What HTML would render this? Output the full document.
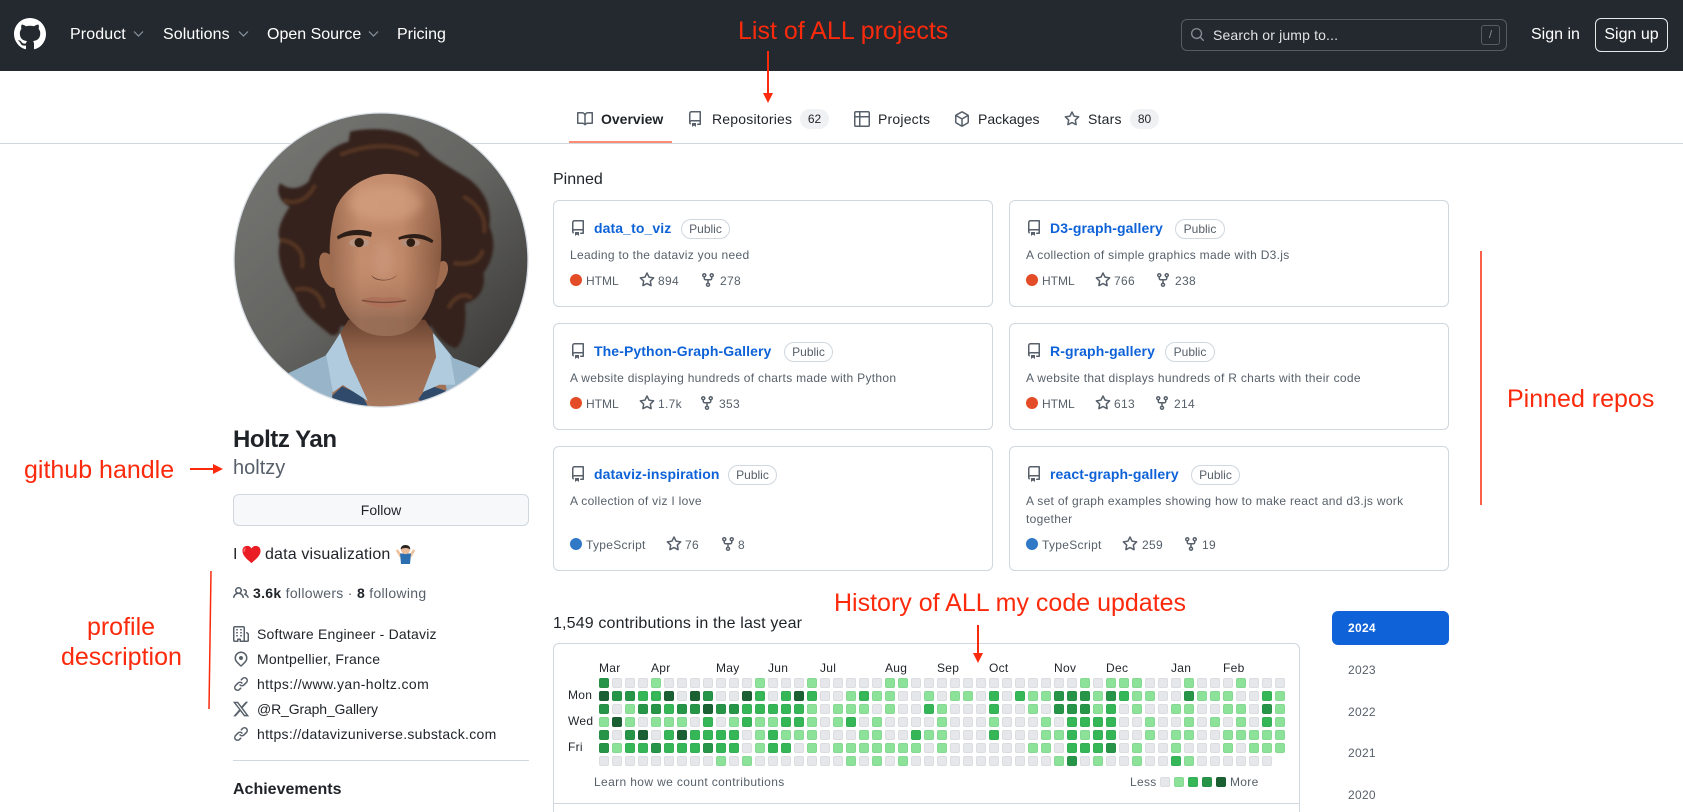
<!DOCTYPE html>
<html lang="en"><head><meta charset="utf-8"><title>holtzy</title>
<style>
html,body{margin:0;padding:0;background:#fff}
html{height:812px;overflow:hidden}
body{width:1683px;height:812px;position:relative;overflow:hidden;font-family:"Liberation Sans",sans-serif;color:#1f2328;font-size:14px}
.t{position:absolute;white-space:nowrap;line-height:20px}
.ic{position:absolute;display:block;overflow:visible}
.hd{position:absolute;left:0;top:0;width:1683px;height:71px;background:#24292f}
.w{color:#fff;font-size:16px}
.m{color:#57606a}
.g{fill:#57606a}
.s12{font-size:12px;letter-spacing:.3px}
.b{font-weight:700}
.r{color:#fb2a0c;font-size:25px;line-height:30px}
.card{position:absolute;box-sizing:border-box;width:440px;border:1px solid #d0d7de;border-radius:6px;background:#fff}
.name{color:#0e62d8;font-weight:700;font-size:14px;letter-spacing:.1px}
.pub{position:absolute;box-sizing:border-box;height:20px;line-height:18px;border:1px solid #d0d7de;border-radius:10px;font-size:12px;color:#57606a;text-align:center}
.dot{position:absolute;width:12px;height:12px;border-radius:50%}
.ct{position:absolute;height:20px;line-height:20px;border-radius:10px;background:#eff1f3;font-size:12px;text-align:center;color:#1f2328}
.grid{position:absolute;left:599px;top:678px;display:grid;grid-template-columns:repeat(53,10px);grid-auto-rows:10px;gap:3px}
.grid>*,.lg{display:block;width:10px;height:10px;border-radius:2px;box-sizing:border-box;box-shadow:inset 0 0 0 1px rgba(31,35,40,.05);text-decoration:none}
.grid b,.l0{background:#e6e7eb}
.grid u,.l1{background:#8ce299}
.grid s,.l2{background:#35b758}
.grid i,.l3{background:#279547}
.grid em,.l4{background:#1a6032}
.lg{position:absolute;top:777px}
</style></head><body>
<svg width="0" height="0" style="position:absolute"><defs>
<symbol id="mark" viewBox="0 0 16 16"><path d="M8 0c4.42 0 8 3.58 8 8a8.013 8.013 0 0 1-5.45 7.59c-.4.08-.55-.17-.55-.38 0-.27.01-1.13.01-2.2 0-.75-.25-1.23-.54-1.48 1.78-.2 3.65-.88 3.65-3.95 0-.88-.31-1.59-.82-2.15.08-.2.36-1.02-.08-2.12 0 0-.67-.22-2.2.82-.64-.18-1.32-.27-2-.27-.68 0-1.36.09-2 .27-1.53-1.03-2.2-.82-2.2-.82-.44 1.1-.16 1.92-.08 2.12-.51.56-.82 1.28-.82 2.15 0 3.06 1.86 3.75 3.64 3.95-.23.2-.44.55-.51 1.07-.46.21-1.61.55-2.33-.66-.15-.24-.6-.83-1.23-.82-.67.01-.27.38.01.53.34.19.73.9.82 1.13.16.45.68 1.31 2.69.94 0 .67.01 1.3.01 1.49 0 .21-.15.45-.55.37A7.995 7.995 0 0 1 0 8c0-4.42 3.58-8 8-8Z"/></symbol>
<symbol id="repo" viewBox="0 0 16 16"><path d="M2 2.5A2.5 2.5 0 0 1 4.5 0h8.75a.75.75 0 0 1 .75.75v12.5a.75.75 0 0 1-.75.75h-2.5a.75.75 0 0 1 0-1.5h1.75v-2h-8a1 1 0 0 0-.714 1.7.75.75 0 1 1-1.072 1.05A2.495 2.495 0 0 1 2 11.5Zm10.5-1h-8a1 1 0 0 0-1 1v6.708A2.486 2.486 0 0 1 4.5 9h8ZM5 12.25a.25.25 0 0 1 .25-.25h3.5a.25.25 0 0 1 .25.25v3.25a.25.25 0 0 1-.4.2l-1.45-1.087a.249.249 0 0 0-.3 0L5.4 15.7a.25.25 0 0 1-.4-.2Z"/></symbol>
<symbol id="book" viewBox="0 0 16 16"><path d="M0 1.75A.75.75 0 0 1 .75 1h4.253c1.227 0 2.317.59 3 1.501A3.743 3.743 0 0 1 11.006 1h4.245a.75.75 0 0 1 .75.75v10.5a.75.75 0 0 1-.75.75h-4.507a2.25 2.25 0 0 0-1.591.659l-.622.621a.75.75 0 0 1-1.06 0l-.622-.621A2.25 2.25 0 0 0 5.258 13H.75a.75.75 0 0 1-.75-.75Zm7.251 10.324.004-5.073-.002-2.253A2.25 2.25 0 0 0 5.003 2.5H1.5v9h3.757a3.75 3.75 0 0 1 1.994.574ZM8.755 4.75l-.004 7.322a3.752 3.752 0 0 1 1.992-.572H14.5v-9h-3.495a2.25 2.25 0 0 0-2.25 2.25Z"/></symbol>
<symbol id="table" viewBox="0 0 16 16"><path d="M0 1.75C0 .784.784 0 1.75 0h12.5C15.216 0 16 .784 16 1.75v12.5A1.75 1.75 0 0 1 14.25 16H1.75A1.75 1.75 0 0 1 0 14.25ZM6.5 6.5v8h7.75a.25.25 0 0 0 .25-.25V6.5Zm8-1.5V1.75a.25.25 0 0 0-.25-.25H6.5V5Zm-13 1.5v7.75c0 .138.112.25.25.25H5v-8ZM5 5V1.5H1.75a.25.25 0 0 0-.25.25V5Z"/></symbol>
<symbol id="pkg" viewBox="0 0 16 16"><path d="m8.878.392 5.25 3.045c.54.314.872.89.872 1.514v6.098a1.75 1.75 0 0 1-.872 1.514l-5.25 3.045a1.75 1.75 0 0 1-1.756 0l-5.25-3.045A1.75 1.75 0 0 1 1 11.049V4.951c0-.624.332-1.201.872-1.514L7.122.392a1.75 1.75 0 0 1 1.756 0ZM7.875 1.69l-4.63 2.685L8 7.133l4.755-2.758-4.63-2.685a.248.248 0 0 0-.25 0ZM2.5 5.677v5.372c0 .09.047.171.125.216l4.625 2.683V8.432Zm6.25 8.271 4.625-2.683a.25.25 0 0 0 .125-.216V5.677L8.75 8.432Z"/></symbol>
<symbol id="star" viewBox="0 0 16 16"><path d="M8 .25a.75.75 0 0 1 .673.418l1.882 3.815 4.21.612a.75.75 0 0 1 .416 1.279l-3.046 2.97.719 4.192a.751.751 0 0 1-1.088.791L8 12.347l-3.766 1.98a.75.75 0 0 1-1.088-.79l.72-4.194L.818 6.374a.75.75 0 0 1 .416-1.28l4.21-.611L7.327.668A.75.75 0 0 1 8 .25Zm0 2.445L6.615 5.5a.75.75 0 0 1-.564.41l-3.097.45 2.24 2.184a.75.75 0 0 1 .216.664l-.528 3.084 2.769-1.456a.75.75 0 0 1 .698 0l2.77 1.456-.53-3.084a.75.75 0 0 1 .216-.664l2.24-2.183-3.096-.45a.75.75 0 0 1-.564-.41L8 2.694Z"/></symbol>
<symbol id="fork" viewBox="0 0 16 16"><path d="M5 5.372v.878c0 .414.336.75.75.75h4.5a.75.75 0 0 0 .75-.75v-.878a2.25 2.25 0 1 1 1.5 0v.878a2.25 2.25 0 0 1-2.25 2.25h-1.5v2.128a2.251 2.251 0 1 1-1.5 0V8.5h-1.5A2.25 2.25 0 0 1 3.5 6.25v-.878a2.25 2.25 0 1 1 1.5 0ZM5 3.25a.75.75 0 1 0-1.5 0 .75.75 0 0 0 1.5 0Zm6.75.75a.75.75 0 1 0 0-1.5.75.75 0 0 0 0 1.5Zm-3 8.75a.75.75 0 1 0-1.5 0 .75.75 0 0 0 1.5 0Z"/></symbol>
<symbol id="people" viewBox="0 0 16 16"><path d="M2 5.5a3.5 3.5 0 1 1 5.898 2.549 5.508 5.508 0 0 1 3.034 4.084.75.75 0 1 1-1.482.235 4 4 0 0 0-7.9 0 .75.75 0 0 1-1.482-.236A5.507 5.507 0 0 1 3.102 8.05 3.493 3.493 0 0 1 2 5.5ZM11 4a3.001 3.001 0 0 1 2.22 5.018 5.01 5.01 0 0 1 2.56 3.012.749.749 0 0 1-.885.954.752.752 0 0 1-.549-.514 3.507 3.507 0 0 0-2.522-2.372.75.75 0 0 1-.574-.73v-.352a.75.75 0 0 1 .416-.672A1.5 1.5 0 0 0 11 5.5.75.75 0 0 1 11 4Zm-5.5-.5a2 2 0 1 0-.001 3.999A2 2 0 0 0 5.5 3.5Z"/></symbol>
<symbol id="org" viewBox="0 0 16 16"><path d="M1.75 16A1.75 1.75 0 0 1 0 14.25V1.75C0 .784.784 0 1.75 0h8.5C11.216 0 12 .784 12 1.75v12.5c0 .085-.006.168-.018.25h2.268a.25.25 0 0 0 .25-.25V8.285a.25.25 0 0 0-.111-.208l-1.055-.703a.749.749 0 1 1 .832-1.248l1.055.703c.487.325.779.871.779 1.456v5.965A1.75 1.75 0 0 1 14.25 16h-3.5a.766.766 0 0 1-.197-.026c-.099.017-.2.026-.303.026h-3a.75.75 0 0 1-.75-.75V14h-1v1.25a.75.75 0 0 1-.75.75Zm-.25-1.75c0 .138.112.25.25.25H4v-1.25a.75.75 0 0 1 .75-.75h2.5a.75.75 0 0 1 .75.75v1.25h2.25a.25.25 0 0 0 .25-.25V1.75a.25.25 0 0 0-.25-.25h-8.5a.25.25 0 0 0-.25.25ZM3.75 6h.5a.75.75 0 0 1 0 1.5h-.5a.75.75 0 0 1 0-1.5ZM3 3.75A.75.75 0 0 1 3.75 3h.5a.75.75 0 0 1 0 1.5h-.5A.75.75 0 0 1 3 3.75Zm4 3A.75.75 0 0 1 7.75 6h.5a.75.75 0 0 1 0 1.5h-.5A.75.75 0 0 1 7 6.75ZM7.75 3h.5a.75.75 0 0 1 0 1.5h-.5a.75.75 0 0 1 0-1.5ZM3 9.75A.75.75 0 0 1 3.75 9h.5a.75.75 0 0 1 0 1.5h-.5A.75.75 0 0 1 3 9.75ZM7.75 9h.5a.75.75 0 0 1 0 1.5h-.5a.75.75 0 0 1 0-1.5Z"/></symbol>
<symbol id="loc" viewBox="0 0 16 16"><path d="m12.596 11.596-3.535 3.536a1.5 1.5 0 0 1-2.122 0l-3.535-3.536a6.5 6.5 0 1 1 9.192-9.193 6.5 6.5 0 0 1 0 9.193Zm-1.06-8.132v-.001a5 5 0 1 0-7.072 7.072L8 14.07l3.536-3.534a5 5 0 0 0 0-7.072ZM8 9a2 2 0 1 1-.001-3.999A2 2 0 0 1 8 9Z"/></symbol>
<symbol id="link" viewBox="0 0 16 16"><path d="m7.775 3.275 1.25-1.25a3.5 3.5 0 1 1 4.95 4.95l-2.5 2.5a3.5 3.5 0 0 1-4.95 0 .751.751 0 0 1 .018-1.042.751.751 0 0 1 1.042-.018 1.998 1.998 0 0 0 2.83 0l2.5-2.5a2.002 2.002 0 0 0-2.83-2.83l-1.25 1.25a.751.751 0 0 1-1.042-.018.751.751 0 0 1-.018-1.042Zm-4.69 9.64a1.998 1.998 0 0 0 2.83 0l1.25-1.25a.751.751 0 0 1 1.042.018.751.751 0 0 1 .018 1.042l-1.25 1.25a3.5 3.5 0 1 1-4.95-4.95l2.5-2.5a3.5 3.5 0 0 1 4.95 0 .751.751 0 0 1-.018 1.042.751.751 0 0 1-1.042.018 1.998 1.998 0 0 0-2.83 0l-2.5 2.5a1.998 1.998 0 0 0 0 2.83Z"/></symbol>
<symbol id="search" viewBox="0 0 16 16"><path d="M10.68 11.74a6 6 0 0 1-7.922-8.982 6 6 0 0 1 8.982 7.922l3.04 3.04a.749.749 0 0 1-.326 1.275.749.749 0 0 1-.734-.215ZM11.5 7a4.499 4.499 0 1 0-8.997 0A4.499 4.499 0 0 0 11.5 7Z"/></symbol>
<symbol id="x" viewBox="0 0 24 24"><path d="M18.244 2.25h3.308l-7.227 8.26 8.502 11.24H16.17l-5.214-6.817L4.99 21.75H1.68l7.73-8.835L1.254 2.25H8.08l4.713 6.231zm-1.161 17.52h1.833L7.084 4.126H5.117z"/></symbol>
</defs></svg>

<div class="hd"></div>
<svg class="ic" style="left:14px;top:18px" width="32" height="32" fill="#fff"><use href="#mark"/></svg>
<span class="t w" style="left:70px;top:25px;letter-spacing:.1px">Product</span>
<svg class="ic" style="left:133px;top:30px" width="11" height="8" fill="none" stroke="#8b949e" stroke-width="1.2"><path d="M1 1.500l4.500 4.500L10 1.500"/></svg>
<span class="t w" style="left:163px;top:25px;letter-spacing:.1px">Solutions</span>
<svg class="ic" style="left:238px;top:30px" width="11" height="8" fill="none" stroke="#8b949e" stroke-width="1.2"><path d="M1 1.500l4.500 4.500L10 1.500"/></svg>
<span class="t w" style="left:267px;top:25px">Open Source</span>
<svg class="ic" style="left:368px;top:30px" width="11" height="8" fill="none" stroke="#8b949e" stroke-width="1.2"><path d="M1 1.500l4.500 4.500L10 1.500"/></svg>
<span class="t w" style="left:397px;top:25px">Pricing</span>

<div style="position:absolute;left:1181px;top:19px;width:326px;height:32px;box-sizing:border-box;border:1px solid #575c63;border-radius:6px"></div>
<svg class="ic" style="left:1190px;top:27px" width="15" height="15" fill="#868c93"><use href="#search"/></svg>
<span class="t" style="left:1213px;top:25px;color:#e0e2e4;font-size:14px;letter-spacing:.15px">Search or jump to...</span>
<div style="position:absolute;left:1481px;top:25px;width:19px;height:20px;box-sizing:border-box;border:1px solid #575c63;border-radius:3px;color:#8f959b;font-size:11px;line-height:18px;text-align:center">/</div>
<span class="t w" style="left:1531px;top:25px">Sign in</span>
<div style="position:absolute;left:1595px;top:18px;width:73px;height:34px;box-sizing:border-box;border:1px solid #e6e8ea;border-radius:6px;color:#fff;font-size:16px;line-height:32px;text-align:center">Sign up</div>

<!-- tabs -->
<div style="position:absolute;left:0;top:143px;width:1683px;height:1px;background:#d0d7de"></div>
<div style="position:absolute;left:569px;top:141px;width:103px;height:2px;background:#fd8c73"></div>
<svg class="ic g" style="left:577px;top:111px" width="16" height="16"><use href="#book"/></svg>
<span class="t b" style="left:601px;top:109px">Overview</span>
<svg class="ic g" style="left:687px;top:111px" width="16" height="16"><use href="#repo"/></svg>
<span class="t" style="left:712px;top:109px;letter-spacing:.2px">Repositories</span>
<div class="ct" style="left:800px;top:109px;width:29px">62</div>
<svg class="ic g" style="left:854px;top:111px" width="16" height="16"><use href="#table"/></svg>
<span class="t" style="left:878px;top:109px;letter-spacing:.2px">Projects</span>
<svg class="ic g" style="left:954px;top:111px" width="16" height="16"><use href="#pkg"/></svg>
<span class="t" style="left:978px;top:109px">Packages</span>
<svg class="ic g" style="left:1064px;top:111px" width="16" height="16"><use href="#star"/></svg>
<span class="t" style="left:1088px;top:109px;letter-spacing:.2px">Stars</span>
<div class="ct" style="left:1130px;top:109px;width:29px">80</div>

<!-- avatar -->
<svg class="ic" style="left:233px;top:112px" width="296" height="296" viewBox="98 36 889 889">
<defs>
<linearGradient id="bg" x1=".1" y1="0" x2=".95" y2=".95"><stop offset="0" stop-color="#777774"/><stop offset=".5" stop-color="#636360"/><stop offset="1" stop-color="#343331"/></linearGradient>
<linearGradient id="face" x1="0" y1="0" x2="1" y2="0"><stop offset="0" stop-color="#9a694e"/><stop offset=".28" stop-color="#c48d6e"/><stop offset=".65" stop-color="#c08969"/><stop offset="1" stop-color="#875840"/></linearGradient>
<linearGradient id="jaw" x1="0" y1="0" x2="0" y2="1"><stop offset="0" stop-color="#c99475" stop-opacity=".3"/><stop offset=".55" stop-color="#b27a5c" stop-opacity="0"/><stop offset=".9" stop-color="#6f5040" stop-opacity=".5"/></linearGradient>
<linearGradient id="neck" x1="0" y1="0" x2="0" y2="1"><stop offset="0" stop-color="#6a4431"/><stop offset=".35" stop-color="#93634a"/><stop offset="1" stop-color="#a97a5e"/></linearGradient>
<clipPath id="cl"><circle cx="542.5" cy="480.5" r="441"/></clipPath>
<filter id="bl" x="-5%" y="-5%" width="110%" height="110%"><feGaussianBlur stdDeviation="4"/></filter>
<filter id="bl2" x="-30%" y="-30%" width="160%" height="160%"><feGaussianBlur stdDeviation="14"/></filter>
</defs>
<g clip-path="url(#cl)">
<rect x="90" y="30" width="910" height="900" fill="url(#bg)"/>
<path d="M265 820L375 768 425 700 700 700 760 775 840 805 760 930 330 930Z" fill="#98b4c9"/>
<g filter="url(#bl)">
<path d="M450 95C520 80 620 85 665 135 700 180 760 205 810 240 860 280 875 330 868 380 890 430 880 480 850 520 860 570 830 605 795 610 800 680 790 735 765 745 730 735 705 700 695 680L420 680C420 700 405 712 390 705 350 670 300 640 285 585 250 540 225 470 240 425 225 390 250 350 268 320 240 310 225 270 240 250 265 270 295 270 325 245 345 190 385 140 445 125Z" fill="#36231a"/>
<path d="M250 300c30 15 70 5 95-45M240 420c40 5 75 30 65 85M285 570c40-10 75 5 85 55M790 290c40 20 70 60 62 110M760 490c40 5 80 0 88-40M745 625c20-40 50-45 70-30M420 165c70-30 160-40 235 0" fill="none" stroke="#5f3b24" stroke-width="12" opacity=".75"/>
</g>
<path d="M445 660L420 700 398 862 395 900 500 925 660 925 740 870 700 700 675 660Z" fill="url(#neck)"/>
<path d="M396 888l30-28 60 28 20 37H400ZM655 898l30-42 55 18-60 50Z" fill="#2f4a6a"/>
<path d="M420 700l-42 66 20 112 30-22 75 48-55-120ZM698 700l52 65 16 90-48 0-50 22 40-105Z" fill="#b0cbdd"/>
<path d="M395 470c-30-30-45 0-35 40 8 30 25 55 45 55ZM715 490c25-20 35 10 25 35-10 25-25 45-40 45Z" fill="#a06c50"/>
<path d="M560 222C500 222 425 270 405 330 385 400 385 470 395 530 405 590 425 640 470 680 510 715 590 720 640 685 680 650 705 590 715 530 730 460 725 350 705 290 680 245 625 222 560 222Z" fill="url(#face)"/>
<path d="M560 222C500 222 425 270 405 330 385 400 385 470 395 530 405 590 425 640 470 680 510 715 590 720 640 685 680 650 705 590 715 530 730 460 725 350 705 290 680 245 625 222 560 222Z" fill="url(#jaw)"/>
<ellipse cx="555" cy="310" rx="110" ry="55" fill="#d9a685" opacity=".55" filter="url(#bl2)"/>
<ellipse cx="550" cy="480" rx="30" ry="60" fill="#cf9a80" opacity=".6" filter="url(#bl2)"/>
<path d="M512 525c20 20 60 20 78 0-10 20-66 25-78 0Z" fill="#6f4534"/>
<path d="M410 410c30-22 70-25 105-13l-2 14c-35-8-70-8-100 8ZM595 412c35-14 75-14 105 10l-4 8c-30-16-65-20-100-10Z" fill="#2d1f18"/>
<ellipse cx="477" cy="429" rx="30" ry="13" fill="#b99683"/><ellipse cx="632" cy="429" rx="28" ry="12" fill="#b18f7c"/>
<circle cx="477" cy="428" r="14" fill="#2e1d13"/><circle cx="632" cy="428" r="13" fill="#2e1d13"/>
<path d="M485 600c30-12 40-10 65-5 25-5 40-5 68 5-25 30-100 35-133 0Z" fill="#ad7058"/>
<path d="M485 602c45 8 90 8 133 0" stroke="#7a4c3b" stroke-width="4" fill="none"/>
</g>
<circle cx="542.5" cy="480.500" r="441.500" fill="none" stroke="#d8dde3" stroke-width="4"/>
</svg>

<!-- profile -->
<span class="t b" style="left:233px;top:425px;font-size:24px;line-height:30px;letter-spacing:-.45px">Holtz Yan</span>
<span class="t m" style="left:233px;top:455px;font-size:20px;line-height:26px;font-weight:300">holtzy</span>
<div style="position:absolute;left:233px;top:494px;width:296px;height:32px;box-sizing:border-box;border:1px solid #d0d7de;border-radius:6px;background:#f6f8fa;text-align:center;line-height:30px">Follow</div>
<span class="t" style="left:233px;top:545px;font-size:16px">I</span>
<svg class="ic" style="left:242px;top:545px" width="19" height="19" viewBox="0 0 21 20"><path d="M10.5 19.5C6 15.500.5 11.500.5 6 .5 2.500 3 .5 5.800.5c2 0 3.700 1 4.700 2.800C11.500 1.500 13.200.5 15.200.5 18 .5 20.500 2.500 20.500 6c0 5.500-5.500 9.500-10 13.500Z" fill="#ea1c24"/><path d="M4 3.500c-1.500.5-2 2-1.500 3.500" stroke="#ff8a8a" stroke-width="1.200" fill="none"/></svg>
<span class="t" style="left:265px;top:545px;font-size:16px;letter-spacing:.15px">data visualization</span>
<svg class="ic" style="left:395px;top:544px" width="21" height="20" viewBox="0 0 21 20"><path d="M.8 6.500l2-1.300 3 4.300h9.400l3-4.300 2 1.300-3.700 6.500H4.500Z" fill="#f0c29c"/><path d="M5 9.500h11l-1 10.500H6Z" fill="#2c6fb0"/><circle cx="10.500" cy="5.500" r="4.600" fill="#e9bd9b"/><path d="M5.800 5.500C5 -.5 16-.5 15.200 5.500c-2-2-7.400-2-9.400 0Z" fill="#2a2423"/></svg>
<svg class="ic" style="left:233px;top:585px" width="16" height="16" fill="#57606a"><use href="#people"/></svg>
<span class="t" style="left:253px;top:583px;font-size:14px;letter-spacing:.3px"><span class="b">3.6k</span> <span class="m">followers · </span><span class="b">8</span> <span class="m">following</span></span>
<svg class="ic g" style="left:233px;top:626px" width="16" height="16"><use href="#org"/></svg>
<span class="t" style="left:257px;top:624px;letter-spacing:.2px">Software Engineer - Dataviz</span>
<svg class="ic g" style="left:233px;top:651px" width="16" height="16"><use href="#loc"/></svg>
<span class="t" style="left:257px;top:649px;letter-spacing:.22px">Montpellier, France</span>
<svg class="ic g" style="left:233px;top:676px" width="16" height="16"><use href="#link"/></svg>
<span class="t" style="left:257px;top:674px;letter-spacing:.38px">https://www.yan-holtz.com</span>
<svg class="ic g" style="left:232px;top:700px" width="18" height="18"><use href="#x"/></svg>
<span class="t" style="left:257px;top:699px;letter-spacing:-.14px">@R_Graph_Gallery</span>
<svg class="ic g" style="left:233px;top:726px" width="16" height="16"><use href="#link"/></svg>
<span class="t" style="left:257px;top:724px;letter-spacing:.3px">https://datavizuniverse.substack.com</span>
<div style="position:absolute;left:233px;top:760px;width:296px;height:1px;background:#d0d7de"></div>
<span class="t b" style="left:233px;top:780px;font-size:16px">Achievements</span>

<!-- pinned -->
<span class="t" style="left:553px;top:170px;font-size:16px">Pinned</span>

<div class="card" style="left:553px;top:200px;height:107px"></div>
<svg class="ic g" style="left:570px;top:220px" width="16" height="16"><use href="#repo"/></svg>
<span class="t name" style="left:594px;top:218px">data_to_viz</span>
<div class="pub" style="left:681px;top:219px;width:49px">Public</div>
<span class="t m s12" style="left:570px;top:245px">Leading to the dataviz you need</span>
<div class="dot" style="left:570px;top:274px;background:#e34c26"></div>
<span class="t m s12" style="left:586px;top:271px;letter-spacing:0">HTML</span>
<svg class="ic g" style="left:639px;top:272px" width="16" height="16"><use href="#star"/></svg>
<span class="t m s12" style="left:658px;top:271px">894</span>
<svg class="ic g" style="left:700px;top:272px" width="16" height="16"><use href="#fork"/></svg>
<span class="t m s12" style="left:720px;top:271px">278</span>

<div class="card" style="left:1009px;top:200px;height:107px"></div>
<svg class="ic g" style="left:1026px;top:220px" width="16" height="16"><use href="#repo"/></svg>
<span class="t name" style="left:1050px;top:218px">D3-graph-gallery</span>
<div class="pub" style="left:1175px;top:219px;width:50px">Public</div>
<span class="t m s12" style="left:1026px;top:245px">A collection of simple graphics made with D3.js</span>
<div class="dot" style="left:1026px;top:274px;background:#e34c26"></div>
<span class="t m s12" style="left:1042px;top:271px;letter-spacing:0">HTML</span>
<svg class="ic g" style="left:1095px;top:272px" width="16" height="16"><use href="#star"/></svg>
<span class="t m s12" style="left:1114px;top:271px">766</span>
<svg class="ic g" style="left:1155px;top:272px" width="16" height="16"><use href="#fork"/></svg>
<span class="t m s12" style="left:1175px;top:271px">238</span>

<div class="card" style="left:553px;top:323px;height:107px"></div>
<svg class="ic g" style="left:570px;top:343px" width="16" height="16"><use href="#repo"/></svg>
<span class="t name" style="left:594px;top:341px">The-Python-Graph-Gallery</span>
<div class="pub" style="left:784px;top:342px;width:49px">Public</div>
<span class="t m s12" style="left:570px;top:368px">A website displaying hundreds of charts made with Python</span>
<div class="dot" style="left:570px;top:397px;background:#e34c26"></div>
<span class="t m s12" style="left:586px;top:394px;letter-spacing:0">HTML</span>
<svg class="ic g" style="left:639px;top:395px" width="16" height="16"><use href="#star"/></svg>
<span class="t m s12" style="left:658px;top:394px">1.7k</span>
<svg class="ic g" style="left:699px;top:395px" width="16" height="16"><use href="#fork"/></svg>
<span class="t m s12" style="left:719px;top:394px">353</span>

<div class="card" style="left:1009px;top:323px;height:107px"></div>
<svg class="ic g" style="left:1026px;top:343px" width="16" height="16"><use href="#repo"/></svg>
<span class="t name" style="left:1050px;top:341px">R-graph-gallery</span>
<div class="pub" style="left:1165px;top:342px;width:50px">Public</div>
<span class="t m s12" style="left:1026px;top:368px">A website that displays hundreds of R charts with their code</span>
<div class="dot" style="left:1026px;top:397px;background:#e34c26"></div>
<span class="t m s12" style="left:1042px;top:394px;letter-spacing:0">HTML</span>
<svg class="ic g" style="left:1095px;top:395px" width="16" height="16"><use href="#star"/></svg>
<span class="t m s12" style="left:1114px;top:394px">613</span>
<svg class="ic g" style="left:1154px;top:395px" width="16" height="16"><use href="#fork"/></svg>
<span class="t m s12" style="left:1174px;top:394px">214</span>

<div class="card" style="left:553px;top:446px;height:125px"></div>
<svg class="ic g" style="left:570px;top:466px" width="16" height="16"><use href="#repo"/></svg>
<span class="t name" style="left:594px;top:464px">dataviz-inspiration</span>
<div class="pub" style="left:728px;top:465px;width:49px">Public</div>
<span class="t m s12" style="left:570px;top:491px">A collection of viz I love</span>
<div class="dot" style="left:570px;top:538px;background:#3178c6"></div>
<span class="t m s12" style="left:586px;top:535px">TypeScript</span>
<svg class="ic g" style="left:666px;top:536px" width="16" height="16"><use href="#star"/></svg>
<span class="t m s12" style="left:685px;top:535px">76</span>
<svg class="ic g" style="left:720px;top:536px" width="16" height="16"><use href="#fork"/></svg>
<span class="t m s12" style="left:738px;top:535px">8</span>

<div class="card" style="left:1009px;top:446px;height:125px"></div>
<svg class="ic g" style="left:1026px;top:466px" width="16" height="16"><use href="#repo"/></svg>
<span class="t name" style="left:1050px;top:464px">react-graph-gallery</span>
<div class="pub" style="left:1191px;top:465px;width:49px">Public</div>
<span class="t m s12" style="left:1026px;top:491px">A set of graph examples showing how to make react and d3.js work</span>
<span class="t m s12" style="left:1026px;top:509px">together</span>
<div class="dot" style="left:1026px;top:538px;background:#3178c6"></div>
<span class="t m s12" style="left:1042px;top:535px">TypeScript</span>
<svg class="ic g" style="left:1122px;top:536px" width="16" height="16"><use href="#star"/></svg>
<span class="t m s12" style="left:1142px;top:535px">259</span>
<svg class="ic g" style="left:1183px;top:536px" width="16" height="16"><use href="#fork"/></svg>
<span class="t m s12" style="left:1202px;top:535px">19</span>

<!-- contributions -->
<span class="t" style="left:553px;top:614px;font-size:16px;letter-spacing:.15px">1,549 contributions in the last year</span>
<div style="position:absolute;left:553px;top:643px;width:747px;height:190px;box-sizing:border-box;border:1px solid #d0d7de;border-radius:6px"></div>
<div style="position:absolute;left:553px;top:803px;width:747px;height:1px;background:#d0d7de"></div>
<span class="t s12" style="left:599px;top:658px">Mar</span>
<span class="t s12" style="left:651px;top:658px">Apr</span>
<span class="t s12" style="left:716px;top:658px">May</span>
<span class="t s12" style="left:768px;top:658px">Jun</span>
<span class="t s12" style="left:820px;top:658px">Jul</span>
<span class="t s12" style="left:885px;top:658px">Aug</span>
<span class="t s12" style="left:937px;top:658px">Sep</span>
<span class="t s12" style="left:989px;top:658px">Oct</span>
<span class="t s12" style="left:1054px;top:658px">Nov</span>
<span class="t s12" style="left:1106px;top:658px">Dec</span>
<span class="t s12" style="left:1171px;top:658px">Jan</span>
<span class="t s12" style="left:1223px;top:658px">Feb</span>
<span class="t s12" style="left:568px;top:685px">Mon</span>
<span class="t s12" style="left:568px;top:711px">Wed</span>
<span class="t s12" style="left:568px;top:737px">Fri</span>

<div class="grid">
<i></i><b></b><b></b><b></b><u></u><b></b><b></b><b></b><b></b><b></b><b></b><b></b><u></u><b></b><b></b><b></b><u></u><b></b><b></b><b></b><b></b><b></b><u></u><u></u><b></b><b></b><b></b><b></b><b></b><b></b><b></b><b></b><b></b><b></b><b></b><b></b><b></b><u></u><b></b><u></u><u></u><u></u><b></b><b></b><b></b><u></u><b></b><b></b><b></b><u></u><b></b><b></b><b></b>
<em></em><i></i><i></i><s></s><s></s><em></em><b></b><em></em><i></i><b></b><b></b><em></em><s></s><b></b><s></s><em></em><s></s><b></b><b></b><u></u><s></s><u></u><u></u><b></b><b></b><u></u><b></b><u></u><u></u><b></b><s></s><b></b><s></s><u></u><u></u><i></i><i></i><i></i><u></u><i></i><s></s><u></u><u></u><b></b><b></b><i></i><u></u><u></u><u></u><b></b><b></b><s></s><u></u>
<i></i><b></b><u></u><i></i><i></i><s></s><i></i><i></i><em></em><i></i><i></i><s></s><s></s><s></s><s></s><s></s><u></u><b></b><u></u><u></u><u></u><b></b><u></u><b></b><b></b><s></s><u></u><b></b><b></b><b></b><s></s><b></b><b></b><u></u><b></b><i></i><i></i><i></i><u></u><s></s><b></b><u></u><b></b><b></b><u></u><u></u><b></b><b></b><u></u><u></u><b></b><i></i><u></u>
<u></u><em></em><u></u><b></b><u></u><u></u><u></u><b></b><s></s><b></b><u></u><s></s><u></u><u></u><s></s><s></s><u></u><b></b><u></u><s></s><b></b><u></u><b></b><b></b><b></b><b></b><u></u><b></b><b></b><b></b><u></u><b></b><b></b><b></b><u></u><b></b><s></s><s></s><s></s><s></s><b></b><b></b><u></u><b></b><b></b><u></u><b></b><u></u><b></b><u></u><b></b><s></s><u></u>
<i></i><b></b><i></i><em></em><b></b><s></s><em></em><s></s><s></s><s></s><s></s><b></b><u></u><s></s><u></u><u></u><u></u><b></b><b></b><b></b><u></u><u></u><b></b><b></b><s></s><u></u><u></u><b></b><b></b><b></b><s></s><b></b><b></b><b></b><u></u><u></u><s></s><u></u><s></s><s></s><b></b><b></b><u></u><b></b><u></u><u></u><b></b><b></b><u></u><u></u><u></u><u></u><u></u>
<i></i><u></u><s></s><s></s><i></i><s></s><s></s><s></s><i></i><s></s><s></s><b></b><u></u><s></s><s></s><b></b><u></u><b></b><u></u><u></u><u></u><u></u><u></u><u></u><u></u><b></b><u></u><b></b><b></b><b></b><b></b><b></b><b></b><u></u><u></u><b></b><s></s><s></s><s></s><i></i><b></b><u></u><b></b><b></b><u></u><b></b><b></b><b></b><u></u><b></b><u></u><u></u><u></u>
<b></b><b></b><b></b><b></b><b></b><b></b><b></b><b></b><b></b><u></u><b></b><u></u><b></b><b></b><b></b><b></b><b></b><b></b><b></b><u></u><b></b><u></u><b></b><u></u><b></b><b></b><b></b><b></b><b></b><b></b><b></b><b></b><b></b><b></b><b></b><u></u><i></i><b></b><u></u><b></b><b></b><u></u><b></b><b></b><s></s><u></u><b></b><b></b><b></b><b></b><b></b><b></b>
</div>

<span class="t m s12" style="left:594px;top:772px;letter-spacing:.37px">Learn how we count contributions</span>
<span class="t m s12" style="left:1130px;top:772px">Less</span>
<div class="lg l0" style="left:1160px"></div><div class="lg l1" style="left:1174px"></div><div class="lg l2" style="left:1188px"></div><div class="lg l3" style="left:1202px"></div><div class="lg l4" style="left:1216px"></div>
<span class="t m s12" style="left:1230px;top:772px">More</span>

<!-- years -->
<div style="position:absolute;left:1332px;top:611px;width:117px;height:34px;background:#0f62d8;border-radius:6px"></div>
<span class="t s12 b" style="left:1348px;top:618px;color:#fff">2024</span>
<span class="t m s12" style="left:1348px;top:660px">2023</span>
<span class="t m s12" style="left:1348px;top:702px">2022</span>
<span class="t m s12" style="left:1348px;top:743px">2021</span>
<span class="t m s12" style="left:1348px;top:785px">2020</span>

<!-- annotations -->
<span class="t r" style="left:738px;top:16px">List of ALL projects</span>
<span class="t r" style="left:1507px;top:384px">Pinned repos</span>
<span class="t r" style="left:834px;top:588px">History of ALL my code updates</span>
<span class="t r" style="left:24px;top:455px">github handle</span>
<span class="t r" style="left:61px;top:612px;width:120px;text-align:center">profile</span>
<span class="t r" style="left:61px;top:642px;width:120px;text-align:center">description</span>
<svg class="ic" style="left:0;top:0" width="1683" height="812" fill="#fb2a0c" stroke="none">
<rect x="767" y="51" width="2" height="44"/><path d="M763 93h10l-5 10Z"/>
<rect x="977" y="625" width="2" height="30"/><path d="M973 653h10l-5 10Z"/>
<rect x="190" y="468" width="24" height="2"/><path d="M213 464v10l10-5Z"/>
<path d="M1481 251v254" stroke="#fb2a0c" stroke-width="1.500" fill="none"/>
<path d="M211 571l-2 138" stroke="#fb2a0c" stroke-width="1.500" fill="none"/>
</svg>
</body></html>
